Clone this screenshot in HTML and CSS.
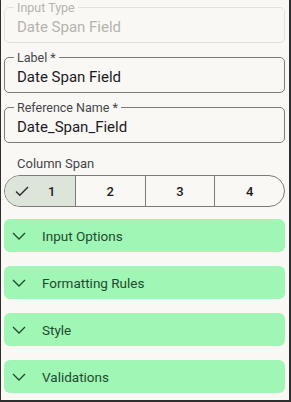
FILE: index.html
```html
<!DOCTYPE html>
<html>
<head>
<meta charset="utf-8">
<link rel="stylesheet" href="styles.css">
</head>
<body>
<div class="frame">
  <div class="content">
    <fieldset class="field disabled">
      <legend>Input Type</legend>
      <div class="value">Date Span Field</div>
    </fieldset>
    <fieldset class="field">
      <legend>Label *</legend>
      <div class="value">Date Span Field</div>
    </fieldset>
    <fieldset class="field">
      <legend>Reference Name *</legend>
      <div class="value">Date_Span_Field</div>
    </fieldset>
    <div class="span-label">Column Span</div>
    <div class="segmented">
      <div class="seg selected">
        <svg class="check" width="14" height="12" viewBox="0 0 14 12"><path d="M1 6.5 L4.8 10.2 L13 2" fill="none" stroke="#2a2d2a" stroke-width="1.4"/></svg>
        <span>1</span>
      </div>
      <div class="seg"><span>2</span></div>
      <div class="seg"><span>3</span></div>
      <div class="seg"><span>4</span></div>
    </div>
    <div class="accordion">
      <svg class="chev" width="14" height="8" viewBox="0 0 14 8"><path d="M1 1 L7 7 L13 1" fill="none" stroke="#1f4a2f" stroke-width="1.3"/></svg>
      <span>Input Options</span>
    </div>
    <div class="accordion">
      <svg class="chev" width="14" height="8" viewBox="0 0 14 8"><path d="M1 1 L7 7 L13 1" fill="none" stroke="#1f4a2f" stroke-width="1.3"/></svg>
      <span>Formatting Rules</span>
    </div>
    <div class="accordion">
      <svg class="chev" width="14" height="8" viewBox="0 0 14 8"><path d="M1 1 L7 7 L13 1" fill="none" stroke="#1f4a2f" stroke-width="1.3"/></svg>
      <span>Style</span>
    </div>
    <div class="accordion">
      <svg class="chev" width="14" height="8" viewBox="0 0 14 8"><path d="M1 1 L7 7 L13 1" fill="none" stroke="#1f4a2f" stroke-width="1.3"/></svg>
      <span>Validations</span>
    </div>
  </div>
</div>
</body>
</html>
```

FILE: styles.css
```css
html, body {
  margin: 0;
  padding: 0;
  background: #faf8f5;
}
body {
  font-family: Roboto, "Noto Sans", sans-serif;
}
.frame {
  width: 291px;
  height: 402px;
  box-sizing: border-box;
  border-left: 1px solid #2e2e2e;
  border-right: 2px solid #2e2e2e;
  border-bottom: 2px solid #2e2e2e;
  background: #faf8f5;
  overflow: hidden;
}
.content {
  padding: 0 4px 0 3px;
  display: flex;
  flex-direction: column;
}
.field {
  margin: 0 0 7px 0;
  padding: 0;
  border: 1px solid #7d7b77;
  border-radius: 5px;
  min-width: 0;
}
.field legend {
  font-size: 12.5px;
  line-height: 12px;
  padding: 2px 3px 0 3px;
  margin-left: 9px;
  color: #45464a;
}
.field .value {
  font-size: 15px;
  line-height: 19px;
  color: #1c1b1f;
  padding: 4px 12px 5px 12px;
}
.field.disabled {
  border-color: #e3e1dc;
}
.field.disabled legend,
.field.disabled .value {
  color: #b5b3ae;
}
.span-label {
  font-size: 13px;
  line-height: 16px;
  color: #45464a;
  padding-left: 13px;
  margin-top: 6px;
  margin-bottom: 3px;
}
.segmented {
  display: grid;
  grid-template-columns: repeat(4, minmax(0, 1fr));
  height: 32px;
  box-sizing: border-box;
  border: 1px solid #7d7b77;
  border-radius: 16px;
  overflow: hidden;
  margin-bottom: 12px;
}
.seg {
  display: flex;
  align-items: center;
  justify-content: center;
  font-size: 13px;
  font-weight: 500;
  color: #1c1b1f;
  border-left: 1px solid #7d7b77;
}
.seg:first-child {
  border-left: none;
}
.seg.selected {
  background: #dde4da;
  justify-content: flex-start;
  padding-left: 10px;
}
.seg.selected span {
  margin-left: 19px;
}
.accordion {
  height: 33px;
  box-sizing: border-box;
  background: #9ff6b5;
  border-radius: 6px;
  display: flex;
  align-items: center;
  padding-left: 8px;
  margin-bottom: 14px;
  color: #1f4a2f;
  font-size: 13.5px;
  font-weight: 400;
}
.accordion .chev {
  margin-right: 16px;
}
```
